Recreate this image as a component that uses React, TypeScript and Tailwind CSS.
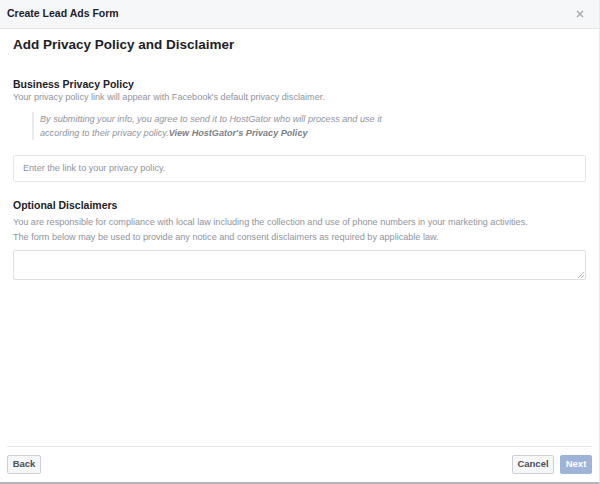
import React from "react";

export default function App() {
  return (
    <div className="w-[600px] h-[484px] bg-white flex flex-col font-['Liberation_Sans',Arial,sans-serif] text-[#1d2129] border-r border-[#e9eaed] border-b-2 border-b-[#b4b6ba]">
      <div className="h-[29px] shrink-0 bg-[#f6f7f9] border-b border-[#e5e5e5] flex items-center justify-between pl-[7px] pr-[15px]">
        <span className="text-[10.5px] font-bold text-[#1d2129]">Create Lead Ads Form</span>
        <svg width="8" height="8" viewBox="0 0 8 8" className="text-[#a7abb3]">
          <path d="M1 1L7 7M7 1L1 7" stroke="currentColor" strokeWidth="1.5" />
        </svg>
      </div>
      <div className="flex-1 px-[13px]">
        <div className="pt-[7px] text-[13.5px] font-bold leading-[18px]">Add Privacy Policy and Disclaimer</div>
        <div className="mt-[23px] text-[10.5px] font-bold leading-[14px]">Business Privacy Policy</div>
        <div className="text-[9.1px] text-[#90949c] leading-[12px]">Your privacy policy link will appear with Facebook's default privacy disclaimer.</div>
        <div className="mt-[9px] ml-[19px] border-l-[2px] border-[#e9eaed] pl-[6px] text-[9.1px] italic text-[#90949c] leading-[14px]">
          <div>By submitting your info, you agree to send it to HostGator who will process and use it</div>
          <div>according to their privacy policy.<span className="font-bold text-[#7d8189]">View HostGator's Privacy Policy</span></div>
        </div>
        <div className="mt-[15px] h-[27px] border border-[#e5e6e9] rounded-[2px] flex items-center px-[9px] text-[9.1px] text-[#90949c]">Enter the link to your privacy policy.</div>
        <div className="mt-[16px] text-[10.5px] font-bold leading-[14px]">Optional Disclaimers</div>
        <div className="mt-[3px] text-[9.1px] text-[#90949c] leading-[15px]">
          <div>You are responsible for compliance with local law including the collection and use of phone numbers in your marketing activities.</div>
          <div>The form below may be used to provide any notice and consent disclaimers as required by applicable law.</div>
        </div>
        <div className="relative mt-[5px] h-[30px] border border-[#dddfe2] rounded-[2px]">
          <svg width="6" height="6" viewBox="0 0 6 6" className="absolute right-[1px] bottom-[1px] text-[#a0a3a8]">
            <path d="M0 6L6 0M3 6L6 3" stroke="currentColor" strokeWidth="0.8" />
          </svg>
        </div>
      </div>
      <div className="mx-[7px] border-t border-[#e5e5e5] h-[36px] shrink-0 flex items-center justify-between">
        <button className="h-[19px] w-[34px] border border-[#ccd0d5] rounded-[2px] bg-[#f6f7f9] text-[9.5px] font-bold text-[#4b4f56]">Back</button>
        <div className="flex gap-[6px]">
          <button className="h-[19px] w-[42px] border border-[#ccd0d5] rounded-[2px] bg-[#f6f7f9] text-[9.5px] font-bold text-[#4b4f56]">Cancel</button>
          <button className="h-[19px] w-[32px] border border-[#9fb3d8] rounded-[2px] bg-[#9fb3d8] text-[9.5px] font-bold text-white">Next</button>
        </div>
      </div>
    </div>
  );
}
